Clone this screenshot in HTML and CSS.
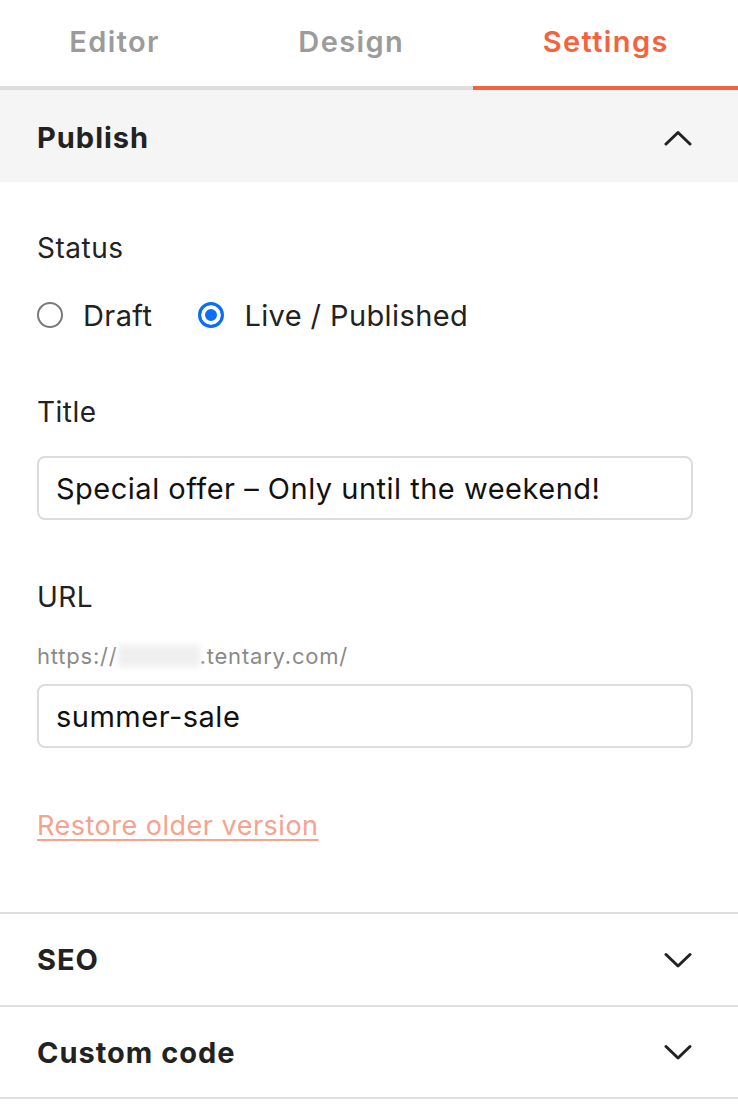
FILE: index.html
```html
<!DOCTYPE html>
<html lang="en">
<head>
<meta charset="utf-8">
<title>Settings</title>
<link rel="stylesheet" href="styles.css">
</head>
<body>
<div class="panel">
  <nav class="tabs">
    <div class="tab">Editor</div>
    <div class="tab">Design</div>
    <div class="tab active">Settings</div>
  </nav>

  <div class="section-header open">
    <span class="section-title">Publish</span>
    <svg class="chevron" width="28" height="16" viewBox="0 0 28 16"><polyline points="2,14 14,2.5 26,14" fill="none" stroke="#222" stroke-width="3" stroke-linecap="round" stroke-linejoin="round"/></svg>
  </div>

  <div class="section-body">
    <div class="label status-label">Status</div>
    <div class="radios">
      <label class="radio"><span class="dot"></span><span>Draft</span></label>
      <label class="radio"><span class="dot checked"></span><span>Live / Published</span></label>
    </div>

    <div class="label title-label">Title</div>
    <div class="input">Special offer – Only until the weekend!</div>

    <div class="label url-label">URL</div>
    <div class="url-prefix">https://<span class="blur"></span>.tentary.com/</div>
    <div class="input input-url">summer-sale</div>

    <a class="restore" href="#">Restore older version</a>
  </div>

  <div class="row">
    <span class="section-title">SEO</span>
    <svg class="chevron" width="28" height="16" viewBox="0 0 28 16"><polyline points="2,2.5 14,14 26,2.5" fill="none" stroke="#222" stroke-width="3" stroke-linecap="round" stroke-linejoin="round"/></svg>
  </div>
  <div class="row">
    <span class="section-title">Custom code</span>
    <svg class="chevron" width="28" height="16" viewBox="0 0 28 16"><polyline points="2,2.5 14,14 26,2.5" fill="none" stroke="#222" stroke-width="3" stroke-linecap="round" stroke-linejoin="round"/></svg>
  </div>
</div>
</body>
</html>
```

FILE: styles.css
```css
* { box-sizing: border-box; }

body {
  margin: 0;
  background: #fff;
  font-family: Inter, "Noto Sans", "Liberation Sans", sans-serif;
  color: #222;
}

.panel {
  width: 738px;
}

.tabs {
  display: flex;
  border-bottom: 4px solid #dedede;
  padding-right: 6px;
}

.tab {
  flex: 1 1 auto;
  height: 90px;
  margin-bottom: -4px;
  display: flex;
  align-items: center;
  justify-content: center;
  padding-bottom: 3px;
  font-size: 29px;
  font-weight: 600;
  color: #9b9b9b;
  border-bottom: 4px solid transparent;
  letter-spacing: 1.4px;
}

.tab.active {
  color: #f4633d;
  border-bottom-color: #f4633d;
  margin-right: -6px;
}

.section-header {
  height: 92px;
  background: #f5f5f5;
  display: flex;
  align-items: center;
  justify-content: space-between;
  padding: 3px 46px 0 37px;
}

.section-title {
  font-size: 29px;
  font-weight: 700;
  color: #222;
  letter-spacing: 1px;
}

.chevron {
  display: block;
}

.section-body {
  padding: 50px 45px 68px 37px;
  display: flex;
  flex-direction: column;
  align-items: flex-start;
}

.label {
  font-size: 28px;
  line-height: 32px;
  color: #222;
  letter-spacing: 0.5px;
}

.radios {
  display: flex;
  gap: 46px;
  margin-top: 31px;
  height: 40px;
  align-items: center;
}

.radio {
  display: flex;
  align-items: center;
  gap: 20px;
  font-size: 29px;
  letter-spacing: 0.4px;
  color: #222;
}

.dot {
  width: 26px;
  height: 26px;
  border-radius: 50%;
  border: 2px solid #7a7a7a;
  background: #fff;
}

.dot.checked {
  border: 3px solid #0c6ef7;
  background: #0c6ef7;
  box-shadow: inset 0 0 0 4px #fff;
}

.title-label {
  margin-top: 61px;
}

.input {
  width: 100%;
  height: 64px;
  margin-top: 28px;
  border: 2px solid #dcdcdc;
  border-radius: 8px;
  padding: 0 17px;
  display: flex;
  align-items: center;
  font-size: 29px;
  color: #111;
  letter-spacing: 0.5px;
}

.url-label {
  margin-top: 61px;
}

.url-prefix {
  margin-top: 29px;
  font-size: 22px;
  line-height: 28px;
  color: #8a8a8a;
  letter-spacing: 0.8px;
  display: flex;
  align-items: center;
}

.blur {
  display: inline-block;
  width: 82px;
  height: 22px;
  background: #efefef;
  filter: blur(3px);
}

.input-url {
  margin-top: 14px;
}

.restore {
  margin-top: 60px;
  font-size: 27px;
  line-height: 36px;
  letter-spacing: 0.5px;
  color: #f6a28d;
  text-decoration: underline;
  text-decoration-thickness: 2px;
  text-underline-offset: 4px;
}

.row {
  height: 93px;
  border-top: 2px solid #dedede;
  display: flex;
  align-items: center;
  justify-content: space-between;
  padding: 0 46px 0 37px;
}

.row:last-child {
  border-bottom: 2px solid #dedede;
  height: 94px;
}
```
